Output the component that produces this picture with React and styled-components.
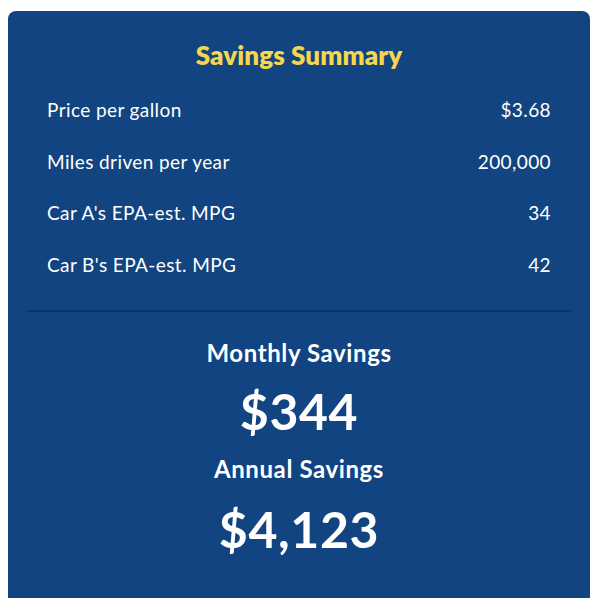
import React from "react";
import styled, { createGlobalStyle } from "styled-components";

const Global = createGlobalStyle`
  body { margin: 0; background: #ffffff; font-family: "Lato", "Liberation Sans", sans-serif; }
`;

const Page = styled.div`
  padding: 11px 5px 0 8px;
`;

const Card = styled.section`
  background: #114480;
  border-radius: 8px 8px 0 0;
  padding: 30px 0 40px;
  min-height: 560px;
  box-sizing: border-box;
  color: #ffffff;
`;

const Title = styled.h2`
  margin: 0 0 14px;
  text-align: center;
  font-size: 26px;
  line-height: 29px;
  font-weight: 800;
  color: #f6d64c;
  letter-spacing: 0.1px;
`;

const Rows = styled.div`
  padding: 0 39px;
  display: flex;
  flex-direction: column;
`;

const Row = styled.div`
  display: flex;
  justify-content: space-between;
  align-items: center;
  height: 51.5px;
  font-size: 19px;
  letter-spacing: 0.4px;
`;

const Divider = styled.hr`
  margin: 20px 18px 27px 19px;
  border: 0;
  height: 2px;
  background: #0c3668;
`;

const Block = styled.div`
  display: flex;
  flex-direction: column;
  align-items: center;
`;

const Label = styled.div`
  font-size: 24px;
  line-height: 27px;
  font-weight: 700;
  letter-spacing: 0.6px;
  margin-bottom: ${p => p.$gap}px;
`;

const Amount = styled.div`
  font-size: 50px;
  line-height: 58px;
  font-weight: 700;
  letter-spacing: 0.6px;
  margin-bottom: ${p => p.$gap}px;
`;

const rows = [
  ["Price per gallon", "$3.68"],
  ["Miles driven per year", "200,000"],
  ["Car A's EPA-est. MPG", "34"],
  ["Car B's EPA-est. MPG", "42"],
];

export default function App() {
  return (
    <Page>
      <Global />
      <Card>
        <Title>Savings Summary</Title>
        <Rows>
          {rows.map(([k, v]) => (
            <Row key={k}>
              <span>{k}</span>
              <span>{v}</span>
            </Row>
          ))}
        </Rows>
        <Divider />
        <Block>
          <Label $gap={16}>Monthly Savings</Label>
          <Amount $gap={15}>$344</Amount>
          <Label $gap={18}>Annual Savings</Label>
          <Amount $gap={0}>$4,123</Amount>
        </Block>
      </Card>
    </Page>
  );
}
